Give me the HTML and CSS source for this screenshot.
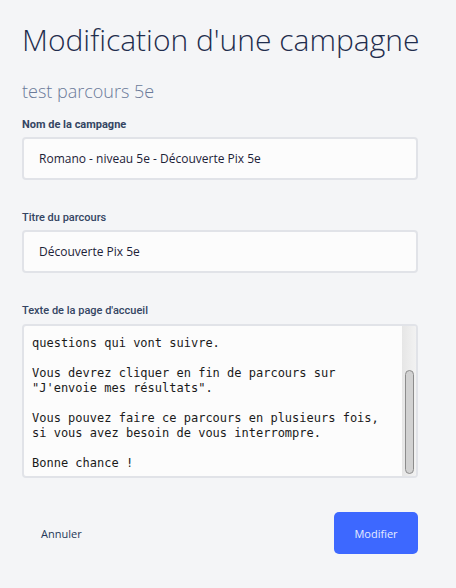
FILE: index.html
```html
<!DOCTYPE html>
<html lang="fr">
<head>
<meta charset="utf-8">
<link rel="stylesheet" href="styles.css">
</head>
<body>
<main class="page">
  <h1 class="title">Modification d'une campagne</h1>
  <p class="subtitle">test parcours 5e</p>
  <form class="form">
    <div class="field">
      <label class="label label-strong">Nom de la campagne</label>
      <div class="input">Romano - niveau 5e - Découverte Pix 5e</div>
    </div>
    <div class="field">
      <label class="label">Titre du parcours</label>
      <div class="input">Découverte Pix 5e</div>
    </div>
    <div class="field">
      <label class="label">Texte de la page d'accueil</label>
      <div class="textarea">
        <div class="textarea-content">questions qui vont suivre.

Vous devrez cliquer en fin de parcours sur
"J'envoie mes résultats".

Vous pouvez faire ce parcours en plusieurs fois,
si vous avez besoin de vous interrompre.

Bonne chance !</div>
        <div class="scrollbar"><div class="thumb"></div></div>
      </div>
    </div>
    <div class="actions">
      <button type="button" class="btn-cancel">Annuler</button>
      <button type="button" class="btn-submit">Modifier</button>
    </div>
  </form>
</main>
</body>
</html>
```
FILE: styles.css
```css
* { box-sizing: border-box; }
html, body { margin: 0; padding: 0; }
body {
  background: #f4f5f7;
  font-family: "Open Sans", sans-serif;
  color: #253858;
  width: 456px;
  height: 588px;
  overflow: hidden;
}
.page {
  padding: 18px 38px 0 22px;
}
.title {
  margin: 0;
  font-weight: 300;
  font-size: 30px;
  line-height: 44px;
  color: #1f2d4d;
  white-space: nowrap;
}
.subtitle {
  margin: 17px 0 0;
  font-weight: 300;
  font-size: 18px;
  line-height: 24px;
  color: #6b7a99;
}
.form {
  margin-top: 15px;
  display: flex;
  flex-direction: column;
}
.field {
  display: flex;
  flex-direction: column;
  margin-bottom: 31px;
}
.label {
  font-family: Roboto, "Liberation Sans", sans-serif;
  font-size: 11px;
  font-weight: 500;
  line-height: 14px;
  color: #344563;
  margin-bottom: 5px;
}
.label-strong { font-weight: 700; }
.input {
  height: 43px;
  border: 2px solid #e1e3e8;
  border-radius: 4px;
  background: #fcfcfc;
  padding: 0 15px;
  display: flex;
  align-items: center;
  font-size: 12px;
  color: #1c2238;
}
.textarea {
  height: 154px;
  margin-top: 1px;
  border: 2px solid #e1e3e8;
  border-radius: 4px;
  background: #fcfcfc;
  display: flex;
  overflow: hidden;
}
.textarea-content {
  flex: 1;
  white-space: pre;
  font-family: "DejaVu Sans Mono", monospace;
  font-size: 12px;
  line-height: 15px;
  color: #1a1a1a;
  padding: 10px 0 0 8px;
}
.scrollbar {
  width: 14px;
  background: linear-gradient(to right, #e6e6e6, #f2f2f2);
  padding: 44px 2px 2px 3px;
  display: flex;
}
.thumb {
  flex: 1;
  background: #d2d2d2;
  border: 1px solid #8c8c8c;
  border-radius: 5px;
}
.actions {
  margin-top: 3px;
  display: flex;
  justify-content: space-between;
  align-items: center;
}
.btn-cancel {
  border: 0;
  background: none;
  font-family: "Open Sans", sans-serif;
  font-size: 11px;
  color: #253858;
  padding: 0 19px;
  height: 42px;
}
.btn-submit {
  border: 0;
  background: #3d68ff;
  color: #e6ecff;
  font-family: "Open Sans", sans-serif;
  font-size: 11px;
  border-radius: 5px;
  width: 84px;
  height: 42px;
  padding: 0;
}
```
